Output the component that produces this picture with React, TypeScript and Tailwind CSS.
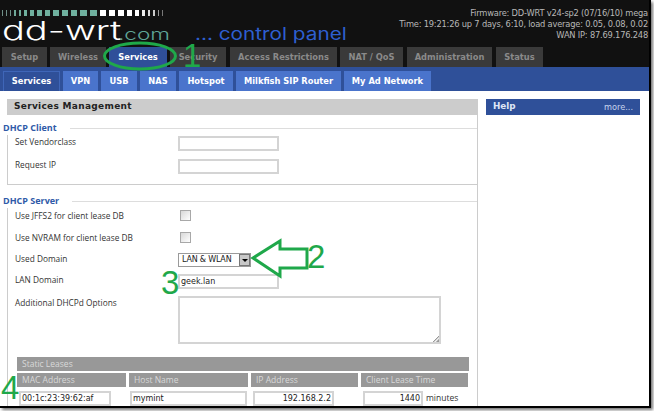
const logoBars = [
  { w: 1, c: '#6f8f88' }, { w: 1, c: '#6f8f88' }, { w: 1, c: '#6f8f88' }, { w: 2, c: '#6fa898' }, { w: 2, c: '#6fa898' },
  { w: 3, c: '#6fb09e' }, { w: 4, c: '#6fb09e' }, { w: 5, c: '#6fb09e' }, { w: 5, c: '#6fb09e' }, { w: 6, c: '#6fb09e' },
  { w: 6, c: '#6fb09e' }, { w: 6, c: '#6fb09e' }, { w: 7, c: '#6fb09e' }, { w: 7, c: '#6fb09e' }, { w: 6, c: '#ffffff' },
  { w: 6, c: '#ffffff' }, { w: 6, c: '#ffffff' }, { w: 5, c: '#ffffff' }, { w: 4, c: '#ffffff' }, { w: 3, c: '#eeeeee' },
  { w: 2, c: '#dddddd' }, { w: 2, c: '#cccccc' }, { w: 1, c: '#999999' }, { w: 1, c: '#777777' },
]

const topTabs = [
  { label: 'Setup', w: 'w-[45px]', gap: 'ml-0' },
  { label: 'Wireless', w: 'w-[56px]', gap: 'ml-[3px]' },
  { label: 'Services', w: 'w-[58px]', gap: 'ml-[3px]', active: true },
  { label: 'Security', w: 'w-[56px]', gap: 'ml-[3px]' },
  { label: 'Access Restrictions', w: 'w-[107px]', gap: 'ml-[4px]' },
  { label: 'NAT / QoS', w: 'w-[63px]', gap: 'ml-[3px]' },
  { label: 'Administration', w: 'w-[85px]', gap: 'ml-[4px]' },
  { label: 'Status', w: 'w-[47px]', gap: 'ml-[4px]' },
]

const subTabs = [
  { label: 'Services', w: 'w-[57px]', active: true },
  { label: 'VPN', w: 'w-[35px]' },
  { label: 'USB', w: 'w-[36px]' },
  { label: 'NAS', w: 'w-[36px]' },
  { label: 'Hotspot', w: 'w-[54px]' },
  { label: 'Milkfish SIP Router', w: 'w-[105px]' },
  { label: 'My Ad Network', w: 'w-[87px]' },
]

function Legend({ title, gap }: { title: string; gap: string }) {
  return (
    <div className="flex items-center h-[14px] -ml-[4px]">
      <span className={`${gap} shrink-0 text-[9px] font-bold text-[#2f5aa8] font-['Open_Sans',sans-serif]`}>{title}</span>
      <div className="flex-1 h-px bg-[#dddddd]" />
    </div>
  )
}

function Field({ className, children }: { className: string; children?: React.ReactNode }) {
  return (
    <div className={`${className} border-2 border-[#d4d4d4] bg-white text-[8px] text-[#222] leading-[11px] flex items-center px-px whitespace-nowrap font-['DejaVu_Sans',sans-serif]`}>
      {children}
    </div>
  )
}

function Row({ label, h, children }: { label: string; h: string; children: React.ReactNode }) {
  return (
    <div className={`flex ${h}`}>
      <div className="w-[170px] pl-[7px] text-[8.3px] leading-[14px] text-[#333] font-['Open_Sans',sans-serif]">{label}</div>
      {children}
    </div>
  )
}

function Check() {
  return <div className="ml-[2px] mt-[1px] w-[11px] h-[11px] border border-[#a8a8a8] bg-gradient-to-br from-[#d8d8d8] to-white" />
}

function GrayCell({ className, children }: { className: string; children?: React.ReactNode }) {
  return (
    <div className={`${className} bg-[#989898] text-[#d8d8d8] text-[8.5px] pl-[5px] flex items-center font-['Open_Sans',sans-serif]`}>
      {children}
    </div>
  )
}

export default function App() {
  return (
    <div className="relative w-[654px] h-[411px] overflow-hidden bg-white">
      <div className="w-[651px] h-[408px] border-r-2 border-b-2 border-black bg-white overflow-hidden shadow-[2px_2px_3px_rgba(0,0,0,0.55)]">
        {/* Header */}
        <div className="h-[67px] bg-[#111111] flex flex-col">
          <div className="h-[47px] relative flex">
            <div className="w-[345px] pl-[2px] pt-[10px]">
              <div className="flex gap-[3px] h-[6px]">
                {logoBars.map((b, i) => (
                  <div key={i} className="h-full" style={{ width: b.w, background: b.c }} />
                ))}
              </div>
              <div className="flex items-baseline h-[27px] whitespace-nowrap font-['Inter',sans-serif]">
                <span className="text-[26px] leading-[30px] font-light text-white origin-left scale-x-[1.46] w-[116px]">dd-wrt</span>
                <span className="text-[16px] leading-[20px] font-light text-[#5fa597] origin-left scale-x-[1.41] w-[77px]">.com</span>
                <span className="text-[17px] leading-[20px] font-normal text-[#2e5fd0] origin-left scale-x-[1.22]">... control panel</span>
              </div>
            </div>
            <div className="flex-1 pt-[8px] pr-[1px] text-right text-[8.3px] leading-[11px] text-[#b8b8b8] whitespace-nowrap font-['DejaVu_Sans',sans-serif] tracking-[-0.2px]">
              <div>Firmware: DD-WRT v24-sp2 (07/16/10) mega</div>
              <div>Time: 19:21:26 up 7 days, 6:10, load average: 0.05, 0.08, 0.02</div>
              <div>WAN IP: 87.69.176.248</div>
            </div>
          </div>
          <div className="h-[20px] flex pl-[2px]">
            {topTabs.map(t => (
              <div
                key={t.label}
                className={`${t.w} ${t.gap} ${t.active ? 'bg-[#2f4f99] text-white' : 'bg-[#3a3a3a] text-[#8a8a8a]'} h-full flex items-center justify-center text-[8.3px] font-bold whitespace-nowrap font-['DejaVu_Sans',sans-serif]`}
              >
                {t.label}
              </div>
            ))}
          </div>
        </div>

        {/* Sub tabs */}
        <div className="h-[24px] bg-[#2f5099] flex items-end gap-[3px] pl-[3px]">
          {subTabs.map(t => (
            <div
              key={t.label}
              className={`${t.w} ${t.active ? 'bg-[#2f5099] border border-[#3f66b8] border-b-0' : 'bg-[#4a74cc]'} h-[20px] flex items-center justify-center text-[8.3px] font-bold text-white whitespace-nowrap font-['DejaVu_Sans',sans-serif]`}
            >
              {t.label}
            </div>
          ))}
        </div>

        {/* Content */}
        <div className="flex pt-[8px]">
          <div className="w-[478px] pl-[7px] border-r border-[#cccccc] h-[308px]">
            <div className="h-[16px] bg-[#cccccc] pl-[7px] flex items-center text-[9px] font-bold text-[#222] tracking-[0.3px] font-['DejaVu_Sans',sans-serif]">
              Services Management
            </div>

            <div className="mt-[6px]">
              <Legend title="DHCP Client" gap="pr-[13px]" />
            </div>
            <div className="border-l border-b border-[#cccccc] h-[50px]">
              <Row label="Set Vendorclass" h="h-[23px]">
                <Field className="mt-[1px] w-[101px] h-[15px]" />
              </Row>
              <Row label="Request IP" h="h-[23px]">
                <Field className="mt-[1px] w-[101px] h-[15px]" />
              </Row>
            </div>

            <div className="mt-[9px]">
              <Legend title="DHCP Server" gap="pr-[13px]" />
            </div>
            <div className="border-l border-[#cccccc] h-[209px] pt-[1px]">
              <Row label="Use JFFS2 for client lease DB" h="h-[22px]">
                <Check />
              </Row>
              <Row label="Use NVRAM for client lease DB" h="h-[21px]">
                <Check />
              </Row>
              <Row label="Used Domain" h="h-[21px]">
                <div className="mt-[1px] w-[73px] h-[14px] border border-[#9a9a9a] bg-white flex items-center pl-[3px] justify-between text-[8px] text-[#222] font-['DejaVu_Sans',sans-serif]">
                  <span className="whitespace-nowrap tracking-[-0.2px]">LAN &amp; WLAN</span>
                  <div className="w-[11px] h-[12px] bg-[#c8c8c8] border border-[#777] flex items-center justify-center">
                    <div className="w-0 h-0 border-x-[3px] border-x-transparent border-t-[3px] border-t-black" />
                  </div>
                </div>
              </Row>
              <Row label="LAN Domain" h="h-[23px]">
                <Field className="mt-[1px] w-[101px] h-[15px]">geek.lan</Field>
              </Row>
              <Row label="Additional DHCPd Options" h="h-[61px]">
                <div className="relative w-[263px] h-[48px] border-2 border-[#d4d4d4] bg-white">
                  <div className="absolute right-0 bottom-0 w-[6px] h-[6px] bg-[linear-gradient(135deg,transparent_50%,#999_50%,#fff_65%,#999_80%)]" />
                </div>
              </Row>
              <div className="pl-[9px] w-[461px]">
                <GrayCell className="h-[14px]">Static Leases</GrayCell>
                <div className="flex gap-[3px] mt-[2px]">
                  <GrayCell className="w-[109px] h-[14px]">MAC Address</GrayCell>
                  <GrayCell className="w-[119px] h-[14px]">Host Name</GrayCell>
                  <GrayCell className="w-[107px] h-[14px]">IP Address</GrayCell>
                  <GrayCell className="w-[107px] h-[14px]">Client Lease Time</GrayCell>
                </div>
                <div className="flex mt-[4px] items-center">
                  <Field className="ml-[2px] w-[92px] h-[15px]">00:1c:23:39:62:af</Field>
                  <Field className="ml-[19px] w-[117px] h-[15px]">mymint</Field>
                  <Field className="ml-[6px] w-[81px] h-[15px] justify-end">192.168.2.2</Field>
                  <Field className="ml-[29px] w-[60px] h-[15px] justify-end">1440</Field>
                  <span className="ml-[3px] text-[8.5px] text-[#333] font-['Open_Sans',sans-serif]">minutes</span>
                </div>
              </div>
            </div>
          </div>

          <div className="flex-1 pl-[8px] pr-[9px]">
            <div className="h-[16px] bg-[#2f5099] flex items-center justify-between pl-[7px] pr-[7px] font-['DejaVu_Sans',sans-serif]">
              <span className="text-[8.8px] font-bold text-[#dfe6f5]">Help</span>
              <span className="text-[8.2px] text-[#c8d4ee]">more...</span>
            </div>
          </div>
        </div>
      </div>

      {/* Hand drawn annotations on top of the screenshot */}
      <svg className="absolute left-0 top-0" width="654" height="411" fill="none">
        <ellipse cx="140" cy="56" rx="35.5" ry="13" stroke="#1fa84a" strokeWidth="3" />
        <path d="M253 258 L280 241 L280 249 L307 249 L307 268 L280 268 L280 276 Z" stroke="#1fa84a" strokeWidth="3" strokeLinejoin="miter" fill="#ffffff" />
      </svg>
      <span className="absolute left-[183px] top-[37px] text-[33px] leading-[38px] text-[#1fa84a] font-['Liberation_Sans',sans-serif]">1</span>
      <span className="absolute left-[307px] top-[238px] text-[33px] leading-[38px] text-[#1fa84a] font-['Liberation_Sans',sans-serif]">2</span>
      <span className="absolute left-[161px] top-[264px] text-[33px] leading-[38px] text-[#1fa84a] font-['Liberation_Sans',sans-serif]">3</span>
      <span className="absolute left-[1px] top-[369px] text-[33px] leading-[38px] text-[#1fa84a] font-['Liberation_Sans',sans-serif]">4</span>
    </div>
  )
}
